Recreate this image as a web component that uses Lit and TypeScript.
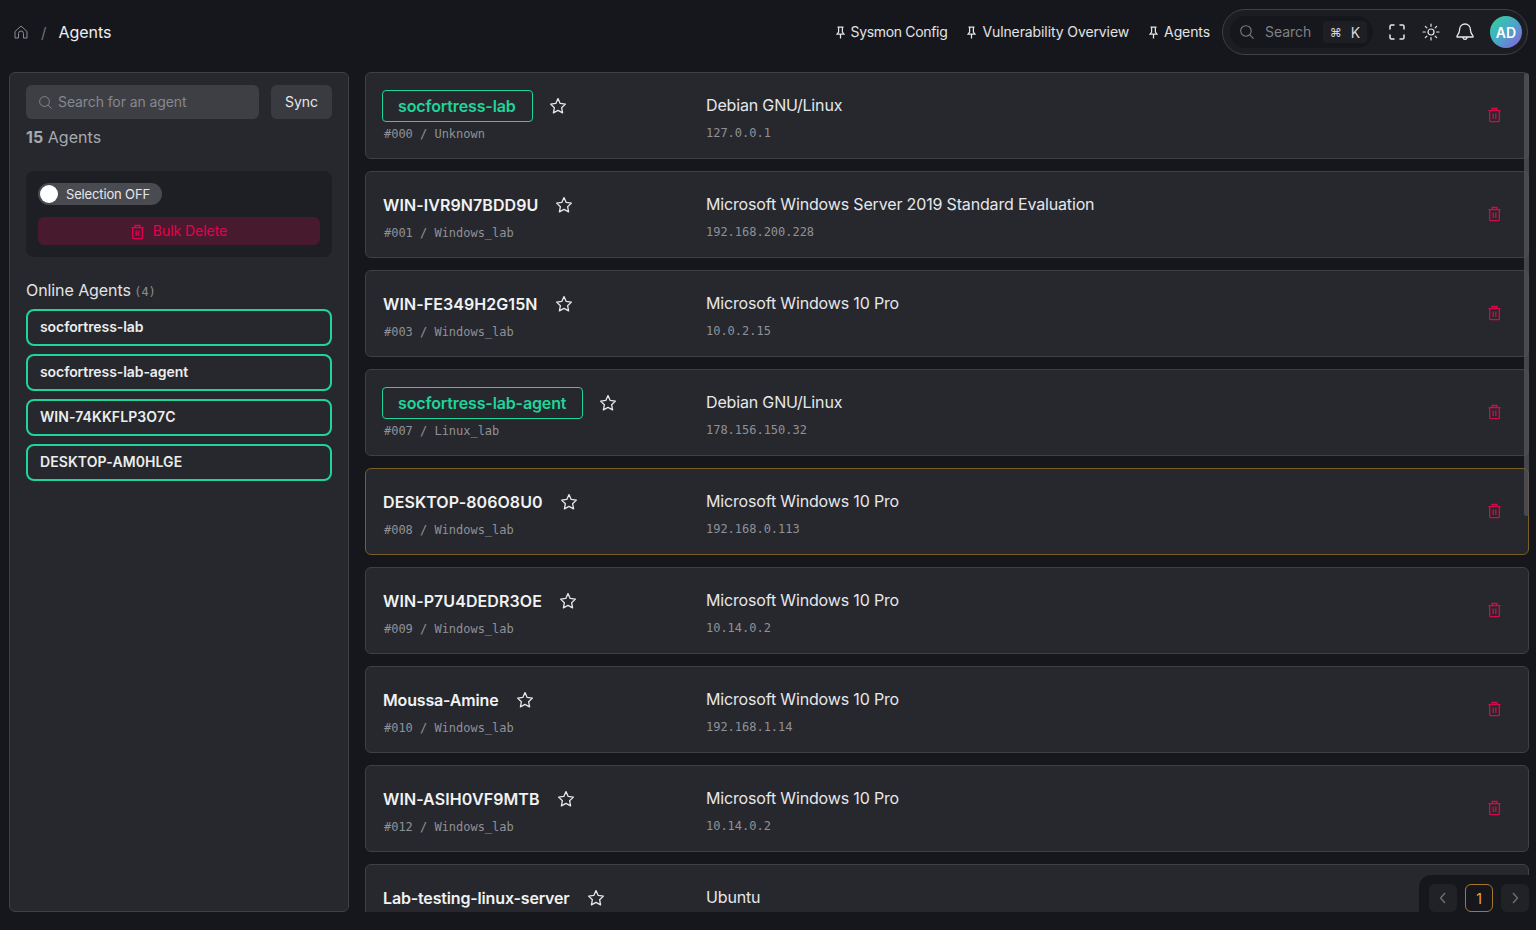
import { LitElement, html, css } from "lit";
import { customElement } from "lit/decorators.js";

const trash = html`<svg class="trash" viewBox="0 0 14 16" fill="none" stroke="currentColor" stroke-width="1.4"><path d="M.5 3.300h13M1.800 3.300v10.900a1 1 0 0 0 1 1h8.400a1 1 0 0 0 1-1V3.300M4.400 3.300V1h5.200v2.300M5.600 6.300v6M8.400 6.300v6"/></svg>`;
const star = html`<svg class="star" viewBox="0 0 18 18" fill="none" stroke="currentColor" stroke-width="1.3" stroke-linejoin="round"><path d="M9 1.600l2.200 4.800 5.200.7-3.800 3.600 1 5.200L9 13.400l-4.600 2.500 1-5.200L1.600 7.100l5.200-.7z"/></svg>`;
const pin = html`<svg class="pin" viewBox="0 0 9 13" fill="none" stroke="currentColor" stroke-width="1.250"><path d="M1.500 1h6M2.600 1v5L1 8.200h7L6.400 6V1M4.500 8.200V12.500"/></svg>`;
const search = (s: number) => html`<svg width=${s} height=${s} viewBox="0 0 16 16" fill="none" stroke="currentColor" stroke-width="1.200"><circle cx="6.800" cy="6.800" r="6"/><path d="M11.200 11.200l4.300 4.300"/></svg>`;

interface Agent { name: string; sub?: string; os: string; ip?: string; online?: boolean; warn?: boolean; caps?: boolean }
const agents: Agent[] = [
  { name: "socfortress-lab", sub: "#000 / Unknown", os: "Debian GNU/Linux", ip: "127.0.0.1", online: true },
  { name: "WIN-IVR9N7BDD9U", sub: "#001 / Windows_lab", os: "Microsoft Windows Server 2019 Standard Evaluation", ip: "192.168.200.228", caps: true },
  { name: "WIN-FE349H2G15N", sub: "#003 / Windows_lab", os: "Microsoft Windows 10 Pro", ip: "10.0.2.15", caps: true },
  { name: "socfortress-lab-agent", sub: "#007 / Linux_lab", os: "Debian GNU/Linux", ip: "178.156.150.32", online: true },
  { name: "DESKTOP-806O8U0", sub: "#008 / Windows_lab", os: "Microsoft Windows 10 Pro", ip: "192.168.0.113", warn: true, caps: true },
  { name: "WIN-P7U4DEDR3OE", sub: "#009 / Windows_lab", os: "Microsoft Windows 10 Pro", ip: "10.14.0.2", caps: true },
  { name: "Moussa-Amine", sub: "#010 / Windows_lab", os: "Microsoft Windows 10 Pro", ip: "192.168.1.14" },
  { name: "WIN-ASIH0VF9MTB", sub: "#012 / Windows_lab", os: "Microsoft Windows 10 Pro", ip: "10.14.0.2", caps: true },
  { name: "Lab-testing-linux-server", os: "Ubuntu" },
];
const online = ["socfortress-lab", "socfortress-lab-agent", "WIN-74KKFLP3O7C", "DESKTOP-AM0HLGE"];

@customElement("app-root")
export class AppRoot extends LitElement {
  static styles = css`
    :host { display: flex; flex-direction: column; width: 1536px; height: 930px; overflow: hidden; background: #16171c; color: #e8e9eb; font-family: Inter, "Noto Sans", sans-serif; font-size: 14px; }
    * { box-sizing: border-box; }
    .header { height: 64px; flex: none; display: flex; align-items: center; padding: 0 8px 0 14px; }
    .crumb { display: flex; align-items: center; flex: 1; }
    .home { width: 14px; height: 14px; color: #8b8e95; }
    .sep { color: #6f7278; margin: 0 12px 0 13px; font-size: 15px; }
    .title { font-size: 16px; color: #eeeff1; }
    .pins { display: flex; gap: 20px; margin-right: 12px; }
    .pinned { display: flex; align-items: center; gap: 6px; font-size: 14px; color: #e2e3e6; letter-spacing: -.1px; }
    .pinned span { padding-bottom: 2px; }
    .pinned.tight { letter-spacing: -.33px; }
    .pin { width: 9px; height: 13px; }
    .tools { width: 306px; height: 46px; border: 1px solid #3e4046; border-radius: 23px; background: #1c1d22; display: flex; align-items: center; padding: 0 5px 0 7px; }
    .gsearch { width: 143px; flex: none; height: 32px; border-radius: 16px; background: #16171c; display: flex; align-items: center; padding: 0 6px 0 10px; color: #7e8187; }
    .gsearch span { margin-left: 11px; flex: 1; font-size: 14px; padding-bottom: 2px; letter-spacing: -.05px; }
    .kbd { flex: none; width: 44px; height: 22px; background: #1e1f24; border-radius: 4px; display: flex; align-items: center; justify-content: center; gap: 9px; color: #d5d6d9; font-size: 12px; }
    .kbd b { font-weight: 400; font-size: 14px; }
    .tool { width: 34px; flex: none; display: flex; justify-content: center; color: #e6e7ea; }
    .tool svg { width: 18px; height: 18px; }
    .tgroup { display: flex; margin-left: 7px; }
    .avatar { width: 32px; height: 32px; flex: none; margin-left: auto; border-radius: 50%; background: linear-gradient(135deg, #2fd39a 0%, #4aa7c8 50%, #8b5be0 100%); display: flex; align-items: center; justify-content: center; font-weight: 600; font-size: 14px; color: #fff; }

    .main { flex: 1; min-height: 0; display: flex; gap: 16px; padding: 8px 7px 18px 9px; }
    .side { width: 340px; flex: none; background: #27282d; border: 1px solid #3e4046; border-radius: 6px; padding: 12px 16px; }
    .srow { display: flex; gap: 12px; }
    .sinput { flex: 1; height: 34px; border-radius: 6px; background: #3e3f44; display: flex; align-items: center; padding: 0 0 2px 13px; gap: 6px; color: #85888e; font-size: 14px; letter-spacing: -.1px; }
    .sinput svg { margin-top: 2px; }
    .sync { width: 61px; height: 34px; padding-bottom: 2px; border-radius: 6px; background: #3a3b40; display: flex; align-items: center; justify-content: center; color: #e6e7ea; }
    .count { margin-top: 8px; font-size: 16px; line-height: 20px; color: #a4a9b0; letter-spacing: .05px; }
    .count b { font-weight: 700; }
    .sel { margin-top: 24px; height: 86px; background: #1e1f24; border-radius: 8px; padding: 12px; display: flex; flex-direction: column; gap: 12px; }
    .toggle { width: 124px; height: 22px; border-radius: 11px; background: #4a4b50; display: flex; align-items: center; padding-left: 2px; gap: 8px; font-size: 13px; color: #e6e7ea; letter-spacing: -.15px; }
    .knob { width: 18px; height: 18px; border-radius: 50%; background: #fff; flex: none; }
    .bulk { height: 28px; padding-bottom: 1px; border-radius: 6px; background: #471a2e; color: #e8004f; display: flex; align-items: center; justify-content: center; gap: 9px; font-size: 14px; letter-spacing: -.05px; }
    .bulk .trash { width: 13px; height: 16px; margin-top: 2px; color: #e8004f; }
    .ohead { margin-top: 23px; font-size: 16px; line-height: 20px; color: #e2e3e6; letter-spacing: -.08px; }
    .ohead span { font-size: 12px; color: #8b8e95; font-family: "DejaVu Sans Mono", monospace; margin-left: -1px; }
    .olist { margin-top: 7px; display: flex; flex-direction: column; gap: 8px; }
    .oitem { height: 37px; padding: 0 12px 2px; border: 2px solid #1fd59a; border-radius: 8px; display: flex; align-items: center; font-weight: 600; font-size: 14px; color: #eceded; letter-spacing: -.08px; }
    .oitem.caps { letter-spacing: .08px; }

    .listwrap { flex: 1; min-width: 0; position: relative; overflow: hidden; }
    .list { display: flex; flex-direction: column; gap: 12px; }
    .card { height: 87px; flex: none; background: #27282d; border: 1px solid #3e4046; border-radius: 6px; display: flex; padding: 0 27px 0 17px; }
    .card.warn { border-color: #7b5e24; }
    .id { width: 323px; flex: none; padding-top: 17px; }
    .nrow { height: 32px; display: flex; align-items: center; }
    .name { font-size: 16px; font-weight: 600; color: #f1f2f3; letter-spacing: -.16px; }
    .name.caps { letter-spacing: .08px; }
    .chip { margin-left: -1px; height: 32px; padding: 0 16px 0 15px; border: 1px solid #1fd59a; border-radius: 4px; display: flex; align-items: center; color: #1fd59a; letter-spacing: -.13px; }
    .star { width: 18px; height: 18px; margin-left: 17px; color: #e6e7ea; flex: none; }
    .chip + .star { margin-left: 16px; }
    .sub, .ip { font-family: "DejaVu Sans Mono", "Liberation Mono", monospace; font-size: 12px; color: #8f9197; line-height: 16px; }
    .sub { margin-top: 4px; padding-left: 1px; white-space: pre; letter-spacing: -.02px; }
    .info { flex: 1; padding-top: 22px; }
    .os { font-size: 16px; line-height: 20px; color: #e6e7ea; letter-spacing: -.16px; }
    .ip { margin-top: 10px; letter-spacing: -.02px; }
    .del { align-self: center; display: flex; margin-bottom: 1px; }
    .del .trash { width: 13px; height: 16px; color: #d60a47; }
    .thumb { position: absolute; right: 0; top: 1px; width: 5px; height: 443px; background: #55565b; border-radius: 3px; opacity: .75; }
    .pager { position: absolute; right: 0; bottom: 0; width: 110px; height: 37px; background: #16171c; border-top-left-radius: 12px; display: flex; align-items: flex-start; gap: 8px; padding: 9px 0 0 10px; }
    .pbtn { width: 28px; height: 28px; border-radius: 6px; background: #212226; display: flex; align-items: center; justify-content: center; color: #6f7278; flex: none; }
    .pbtn svg { width: 12px; height: 12px; }
    .pbtn.on { background: transparent; border: 1px solid #a37a2c; color: #e9a93a; font-size: 14px; }
  `;

  render() {
    return html`
      <div class="header">
        <div class="crumb">
          <svg class="home" viewBox="0 0 14 14" fill="none" stroke="currentColor" stroke-width="1"><path d="M1 6.500L7 1l6 5.500V13H9.500V8.500a2.500 2.500 0 0 0-5 0V13H1z" stroke-linejoin="round"/></svg>
          <span class="sep">/</span><span class="title">Agents</span>
        </div>
        <div class="pins">
          <div class="pinned tight">${pin}<span>Sysmon Config</span></div>
          <div class="pinned">${pin}<span>Vulnerability Overview</span></div>
          <div class="pinned">${pin}<span>Agents</span></div>
        </div>
        <div class="tools">
          <div class="gsearch">${search(14)}<span>Search</span><div class="kbd">⌘<b>K</b></div></div>
          <div class="tgroup">
            <div class="tool"><svg viewBox="0 0 18 18" fill="none" stroke="currentColor" stroke-width="1.500" stroke-linecap="round"><path d="M2 6V3.500A1.500 1.500 0 0 1 3.500 2H6M12 2h2.500A1.500 1.500 0 0 1 16 3.500V6M16 12v2.500a1.500 1.500 0 0 1-1.500 1.500H12M6 16H3.500A1.500 1.500 0 0 1 2 14.500V12"/></svg></div>
            <div class="tool"><svg viewBox="0 0 18 18" fill="none" stroke="currentColor" stroke-width="1.200" stroke-linecap="round"><circle cx="9" cy="9" r="3"/><path d="M9 1v2.300M9 14.700V17M1 9h2.300M14.700 9H17M3.300 3.300l1.600 1.600M13.100 13.100l1.600 1.600M3.300 14.700l1.600-1.600M13.100 4.900l1.600-1.600"/></svg></div>
            <div class="tool"><svg viewBox="0 0 18 18" fill="none" stroke="currentColor" stroke-width="1.300" stroke-linejoin="round"><path d="M9 1c-3.200 0-5.400 2.400-5.400 5.500 0 4-1.900 5.500-2.600 6.500v1h16v-1c-.7-1-2.600-2.500-2.600-6.500C14.400 3.400 12.200 1 9 1zM7 14c0 1.400.9 2.300 2 2.300s2-.9 2-2.300"/></svg></div>
          </div>
          <div class="avatar">AD</div>
        </div>
      </div>
      <div class="main">
        <aside class="side">
          <div class="srow">
            <div class="sinput">${search(13)}<span>Search for an agent</span></div>
            <div class="sync">Sync</div>
          </div>
          <div class="count"><b>15</b> Agents</div>
          <div class="sel">
            <div class="toggle"><div class="knob"></div><span>Selection OFF</span></div>
            <div class="bulk">${trash}<span>Bulk Delete</span></div>
          </div>
          <div class="ohead">Online Agents <span>(4)</span></div>
          <div class="olist">${online.map((o) => html`<div class="oitem ${o === o.toUpperCase() ? "caps" : ""}">${o}</div>`)}</div>
        </aside>
        <div class="listwrap">
          <div class="list">
            ${agents.map((a) => html`
              <div class="card ${a.warn ? "warn" : ""}">
                <div class="id">
                  <div class="nrow"><div class="name ${a.online ? "chip" : ""} ${a.caps ? "caps" : ""}">${a.name}</div>${star}</div>
                  ${a.sub ? html`<div class="sub">${a.sub}</div>` : ""}
                </div>
                <div class="info"><div class="os">${a.os}</div>${a.ip ? html`<div class="ip">${a.ip}</div>` : ""}</div>
                <div class="del">${trash}</div>
              </div>`)}
          </div>
          <div class="thumb"></div>
          <div class="pager">
            <div class="pbtn"><svg viewBox="0 0 12 12" fill="none" stroke="currentColor" stroke-width="1.300"><path d="M8 1L3.500 6 8 11"/></svg></div>
            <div class="pbtn on">1</div>
            <div class="pbtn"><svg viewBox="0 0 12 12" fill="none" stroke="currentColor" stroke-width="1.300"><path d="M4 1l4.500 5L4 11"/></svg></div>
          </div>
        </div>
      </div>`;
  }
}
